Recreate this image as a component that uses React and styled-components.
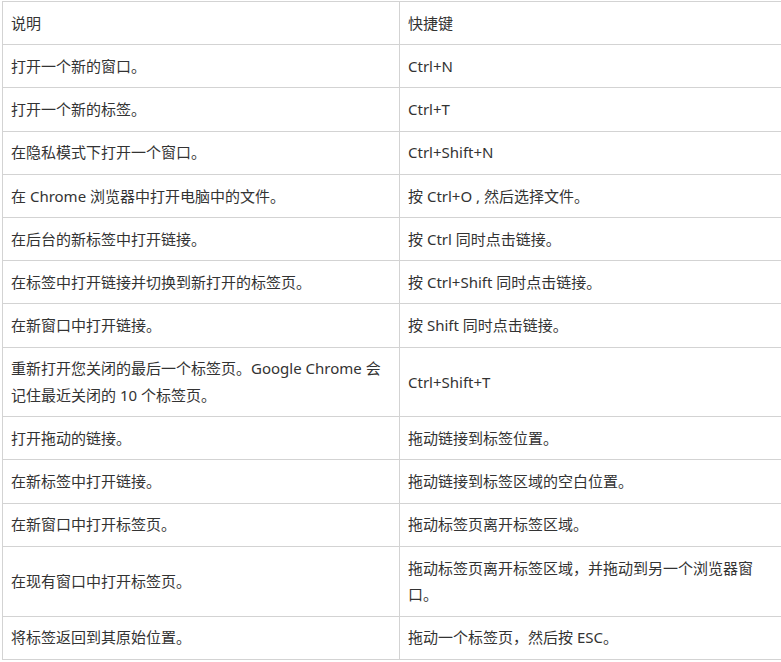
import React from "react";
import styled, { createGlobalStyle } from "styled-components";

const Global = createGlobalStyle`
  html, body { margin: 0; padding: 0; background: #fff; }
  body {
    font-family: "Noto Sans", "Noto Sans CJK SC", sans-serif;
    color: #333;
  }
`;

const Page = styled.div`
  padding: 1px 0 0 2px;
`;

const Table = styled.table`
  width: 779px;
  border-collapse: collapse;
  table-layout: fixed;
  font-size: 15px;
  line-height: 26.6px;
  color: #333;
`;

const Col = styled.col`
  width: ${(p) => p.$w}px;
`;

const Cell = styled.td`
  border: 1px solid #d3d3d3;
  padding: 7.8px 16px 7.8px 8px;
  vertical-align: middle;
  text-align: left;
  font-weight: normal;
`;

const rows = [
  ["说明", "快捷键"],
  ["打开一个新的窗口。", "Ctrl+N"],
  ["打开一个新的标签。", "Ctrl+T"],
  ["在隐私模式下打开一个窗口。", "Ctrl+Shift+N"],
  ["在 Chrome 浏览器中打开电脑中的文件。", "按 Ctrl+O , 然后选择文件。"],
  ["在后台的新标签中打开链接。", "按 Ctrl 同时点击链接。"],
  ["在标签中打开链接并切换到新打开的标签页。", "按 Ctrl+Shift 同时点击链接。"],
  ["在新窗口中打开链接。", "按 Shift 同时点击链接。"],
  ["重新打开您关闭的最后一个标签页。Google Chrome 会记住最近关闭的 10 个标签页。", "Ctrl+Shift+T"],
  ["打开拖动的链接。", "拖动链接到标签位置。"],
  ["在新标签中打开链接。", "拖动链接到标签区域的空白位置。"],
  ["在新窗口中打开标签页。", "拖动标签页离开标签区域。"],
  ["在现有窗口中打开标签页。", "拖动标签页离开标签区域，并拖动到另一个浏览器窗口。"],
  ["将标签返回到其原始位置。", "拖动一个标签页，然后按 ESC。"],
];

export default function App() {
  return (
    <Page>
      <Global />
      <Table>
        <colgroup>
          <Col $w={397} />
          <Col $w={382} />
        </colgroup>
        <tbody>
          {rows.map(([a, b], i) => (
            <tr key={i}>
              <Cell>{a}</Cell>
              <Cell>{b}</Cell>
            </tr>
          ))}
        </tbody>
      </Table>
    </Page>
  );
}
